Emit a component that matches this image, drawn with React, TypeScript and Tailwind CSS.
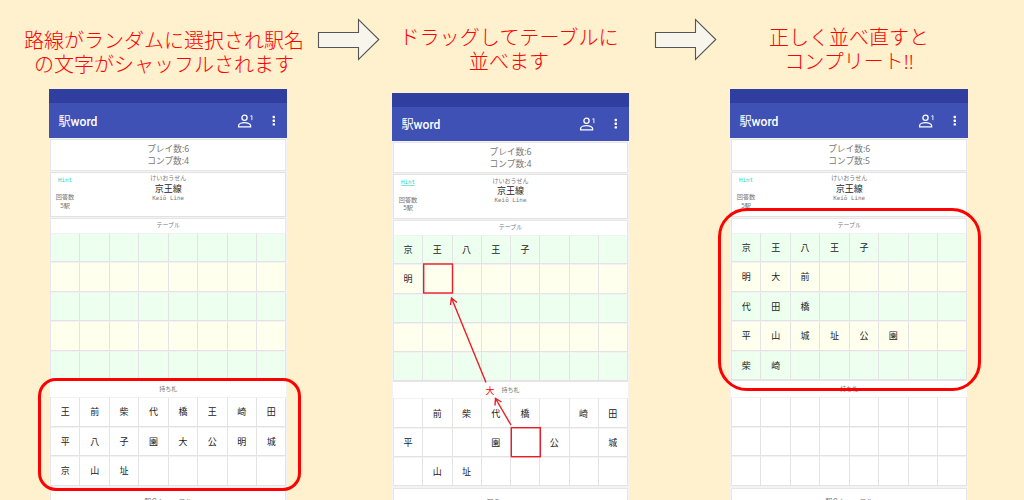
import React from "react";

const TOTAL_COLS = 8;

type Variant = "a" | "b" | "c";

function Arrow() {
  return (
    <svg className="block h-[44px] w-[64px]" viewBox="0 0 64 44">
      <path
        d="M1.5 15.5H41.5V2.5L61.8 22.5L41.5 42.5V30.5H1.5Z"
        fill="#f8f5ec"
        stroke="#555"
        strokeWidth="1.1"
      />
    </svg>
  );
}

function PersonIcon() {
  return (
    <svg className="block h-[16px] w-[18px]" viewBox="0 0 18 16">
      <g fill="none" stroke="#fff" strokeWidth="1.3">
        <circle cx="7.5" cy="4.7" r="2.6" />
        <path d="M1.6 13.8V12.4C1.6 10.5 5.2 9.6 7.5 9.6S13.6 10.5 13.6 12.4V13.8Z" />
      </g>
      <path d="M13.4 3.2L14.9 2.6V7.2" fill="none" stroke="#fff" strokeWidth="0.9" />
    </svg>
  );
}

function Caption({ lines, className }: { lines: string[]; className: string }) {
  return (
    <h2 className={`text-center leading-[24.3px] font-light whitespace-nowrap text-[#ff0000] ${className}`}>
      {lines.map((l) => (
        <div key={l}>{l}</div>
      ))}
    </h2>
  );
}

function Board({ rows, count, tinted, cell }: { rows: string[]; count: number; tinted: boolean; cell: string }) {
  return (
    <div className="mr-[1px] ml-[1px] border-l border-[#e6e6e9]">
      {Array.from({ length: count }, (_, r) => (
        <div key={r} className="grid grid-cols-8">
          {Array.from({ length: TOTAL_COLS }, (_, c) => (
            <div
              key={c}
              className={`flex items-center justify-center border-t border-r border-b border-t-[#f2f2f3] border-r-[#e3e3e5] border-b-[#e3e3e5] text-[9px] leading-none text-[#222] ${cell} ${
                tinted ? (r % 2 ? "bg-[#ffffee]" : "bg-[#edffee]") : "bg-white"
              }`}
            >
              {(rows[r] ?? "")[c]?.trim()}
            </div>
          ))}
        </div>
      ))}
    </div>
  );
}

const geometry: Record<Variant, { width: string; bar: string; info: string; line: string; cell: string; label: string }> = {
  a: {
    width: "w-[238.4px]",
    bar: "h-[35px]",
    info: "h-[33.5px]",
    line: "h-[46px]",
    cell: "h-[29.5px]",
    label: "h-[15px]",
  },
  b: {
    width: "w-[237px]",
    bar: "h-[34.5px]",
    info: "h-[33px]",
    line: "h-[45.5px]",
    cell: "h-[29.3px]",
    label: "h-[15.5px]",
  },
  c: {
    width: "w-[238.4px]",
    bar: "h-[35px]",
    info: "h-[33.5px]",
    line: "h-[46px]",
    cell: "h-[29.5px]",
    label: "h-[15px]",
  },
};

function Phone({
  variant,
  completed,
  table,
  hand,
  hintUnderlined = false,
}: {
  variant: Variant;
  completed: number;
  table: string[];
  hand: string[];
  hintUnderlined?: boolean;
}) {
  const g = geometry[variant];
  return (
    <div className={`${g.width} shrink-0 bg-[#f3f3f4] text-[#777]`}>
      <div className="h-[14px] bg-[#303f9f]" />
      <div className={`${g.bar} flex items-center bg-[#3f51b5] pr-[8px] pl-[9.5px] text-white`}>
        <span className="flex-1 pt-[3px] font-['Roboto','Noto_Sans_CJK_JP',sans-serif] text-[12.1px] leading-none font-medium">
          <span className="font-normal">駅</span>word
        </span>
        <PersonIcon />
        <svg className="ml-[14px] block h-[12px] w-[10px]" viewBox="0 0 10 12" fill="#fff">
          <rect x="3.6" y="0.8" width="2.4" height="2.4" rx="0.7" />
          <rect x="3.6" y="4.5" width="2.4" height="2.4" rx="0.7" />
          <rect x="3.6" y="8.2" width="2.4" height="2.4" rx="0.7" />
        </svg>
      </div>
      <div className={`${g.info} px-[1px] pt-[1px] pb-[1px]`}>
        <div className="h-full border border-[#e6e6e9] bg-white pt-[3px] text-center text-[8.7px] leading-[12.4px]">
          <div>プレイ数:6</div>
          <div>コンプ数:{completed}</div>
        </div>
      </div>
      <div className={`${g.line} px-[1px] pb-[1px]`}>
        <div className="grid h-full grid-cols-[28px_1fr_28px] border border-[#e2e2e5] bg-white text-center whitespace-nowrap">
          <div className="flex flex-col items-center text-[6.2px] leading-[8.6px]">
            <span
              className={`mt-[3px] h-[8px] font-['DejaVu_Sans_Mono',monospace] text-[5.9px] leading-[8px] text-[#20dcc8] ${
                hintUnderlined ? "border-b border-[#20dcc8]/60" : ""
              }`}
            >
              Hint
            </span>
            <span className="mt-[9.5px]">回答数</span>
            <span>5駅</span>
          </div>
          <div className="flex flex-col items-center">
            <span className="mt-[2.5px] text-[6px] leading-[7px]">けいおうせん</span>
            <span className="mt-[0.5px] text-[9px] leading-[11px] text-[#222]">京王線</span>
            <span className="font-['DejaVu_Sans_Mono',monospace] text-[5.9px] leading-[9px]">Keiō Line</span>
          </div>
        </div>
      </div>
      <div className={`${g.label} mx-[1px] flex items-center justify-center border border-b-0 border-[#e6e6e9] bg-white pb-[1px] text-[6px] leading-none`}>
        テーブル
      </div>
      <Board rows={table} count={5} tinted cell={g.cell} />
      <div className="mx-[1px] flex h-[17px] items-center justify-center border-t border-[#e6e6e9] bg-white text-[6px] leading-none">
        持ち札
      </div>
      <Board rows={hand} count={3} tinted={false} cell={g.cell} />
      <div className="mx-[1px] mt-[2px] h-[30px] border border-[#e6e6e9] bg-white pt-[8.5px] text-center text-[6.8px] leading-[10px]">
        駅名シャッフル
      </div>
    </div>
  );
}

export default function App() {
  return (
    <main className="relative flex h-[500px] w-[1024px] items-start overflow-hidden bg-[#fff1cd] font-['Noto_Sans','Noto_Sans_CJK_JP',sans-serif]">
      <section className="ml-[22px] flex w-[284px] flex-col pl-[27px]">
        <Caption className="-ml-[27px] h-[89px] pt-[28.5px] text-[20px]" lines={["路線がランダムに選択され駅名", "の文字がシャッフルされます"]} />
        <Phone
          variant="a"
          completed={4}
          table={[]}
          hand={["王前柴代橋王崎田", "平八子園大公明城", "京山址"]}
        />
      </section>
      <div className="ml-[11px] pt-[17px]">
        <Arrow />
      </div>
      <section className="ml-[11px] w-[237px]">
        <Caption className="-ml-[11px] -mr-[8px] h-[92.5px] pt-[25.5px] text-[20.1px]" lines={["ドラッグしてテーブルに", "並べます"]} />
        <Phone
          variant="b"
          completed={4}
          hintUnderlined
          table={["京王八王子", "明"]}
          hand={[" 前柴代橋 崎田", "平  園 公 城", " 山址"]}
        />
      </section>
      <div className="ml-[25px] pt-[17px]">
        <Arrow />
      </div>
      <section className="ml-[12px] w-[238px]">
        <Caption className="h-[89px] pt-[25.5px] text-[20px]" lines={["正しく並べ直すと", "コンプリート!!"]} />
        <Phone
          variant="c"
          completed={5}
          table={["京王八王子", "明大前", "代田橋", "平山城址公園", "柴崎"]}
          hand={[]}
        />
      </section>

      <div className="absolute top-[378px] left-[38px] h-[113px] w-[263px] rounded-[18px] border-[3px] border-[#ff0000]" />
      <div className="absolute top-[208px] left-[718px] h-[183px] w-[263px] rounded-[29px] border-[3px] border-[#ff0000]" />

      <svg className="absolute top-0 left-0 h-[500px] w-[1024px]" viewBox="0 0 1024 500">
        <g fill="none" stroke="#ed1c24" strokeWidth="1.4">
          <rect x="423.7" y="264" width="28.8" height="29" />
          <rect x="511.3" y="427.7" width="29" height="29" />
          <path d="M486 382.5L451.5 298M450.5 305L451.5 298L457 302.5" />
          <path d="M511 425L495.5 398.5M495 405.5L495.5 398.5L501.5 402" />
        </g>
      </svg>
      <span className="absolute top-[385.5px] left-[485.5px] text-[9px] leading-[9px] text-[#ff0000]">大</span>
    </main>
  );
}
